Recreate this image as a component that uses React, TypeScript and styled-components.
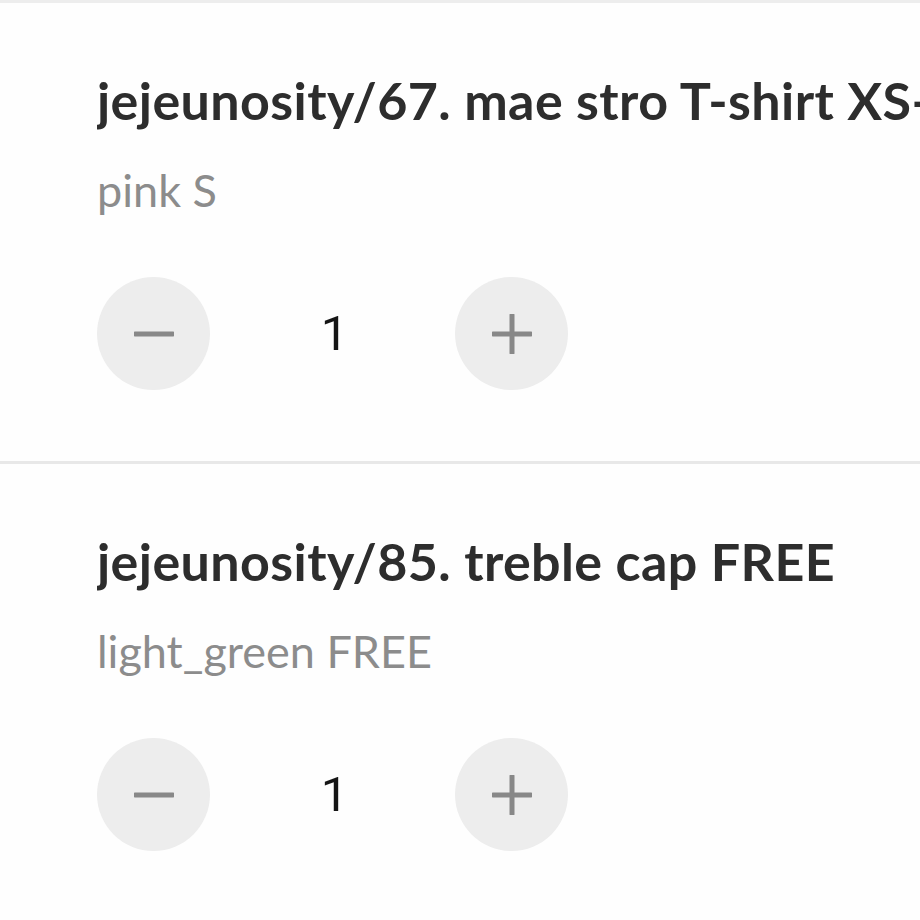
import React from 'react';
import styled, { createGlobalStyle } from 'styled-components';

const GlobalStyle = createGlobalStyle`
    html, body {
        margin: 0;
        padding: 0;
        background: #ffffff;
    }
    body {
        font-family: Lato, "Noto Sans", sans-serif;
        overflow: hidden;
    }
`

const CartList = styled.div`
    width: 920px;
    height: 920px;
    overflow: hidden;
    background: #fefefe;
    border-top: 3px solid #ededed;
`

const CartItem = styled.div`
    padding: 66px 0 71px 97px;
    border-bottom: 3px solid #e8e8e8;
`

const ItemTitle = styled.h2`
    margin: 0;
    font-family: Lato, sans-serif;
    font-weight: 700;
    font-size: 52px;
    line-height: 62px;
    letter-spacing: 0.4px;
    color: #2d2d2d;
    white-space: nowrap;
    overflow: hidden;
`

const ItemOption = styled.div`
    margin-top: 32px;
    font-family: Lato, sans-serif;
    font-size: 45px;
    line-height: 54px;
    color: #8c8c8c;
`

const Counter = styled.div`
    display: flex;
    align-items: center;
    margin-top: 60px;
`

const RoundButton = styled.button`
    width: 113px;
    height: 113px;
    border-radius: 50%;
    border: none;
    padding: 0;
    background: #ededed;
    display: flex;
    align-items: center;
    justify-content: center;
    flex-shrink: 0;
`

const Quantity = styled.span`
    width: 245px;
    text-align: center;
    font-family: Roboto, sans-serif;
    font-size: 49px;
    line-height: 60px;
    color: #151515;
    padding-left: 4px;
    box-sizing: border-box;
`

const StepIcon = ({ plus }: { plus?: boolean }) => (
    <svg width="40" height="40" viewBox="0 0 40 40">
        <path d="M1 20 H39" stroke="#888888" strokeWidth="5" strokeLinecap="round" />
        {plus && <path d="M20 1 V39" stroke="#888888" strokeWidth="5" strokeLinecap="round" />}
    </svg>
)

const items = [
    { title: 'jejeunosity/67. mae stro T-shirt XS-XL', option: 'pink S', qty: 1 },
    { title: 'jejeunosity/85. treble cap FREE', option: 'light_green FREE', qty: 1 },
]

export default function App() {
    return (
        <>
            <GlobalStyle />
            <CartList>
                {items.map((item) => (
                    <CartItem key={item.title}>
                        <ItemTitle>{item.title}</ItemTitle>
                        <ItemOption>{item.option}</ItemOption>
                        <Counter>
                            <RoundButton aria-label="decrease">
                                <StepIcon />
                            </RoundButton>
                            <Quantity>{item.qty}</Quantity>
                            <RoundButton aria-label="increase">
                                <StepIcon plus />
                            </RoundButton>
                        </Counter>
                    </CartItem>
                ))}
            </CartList>
        </>
    );
}
